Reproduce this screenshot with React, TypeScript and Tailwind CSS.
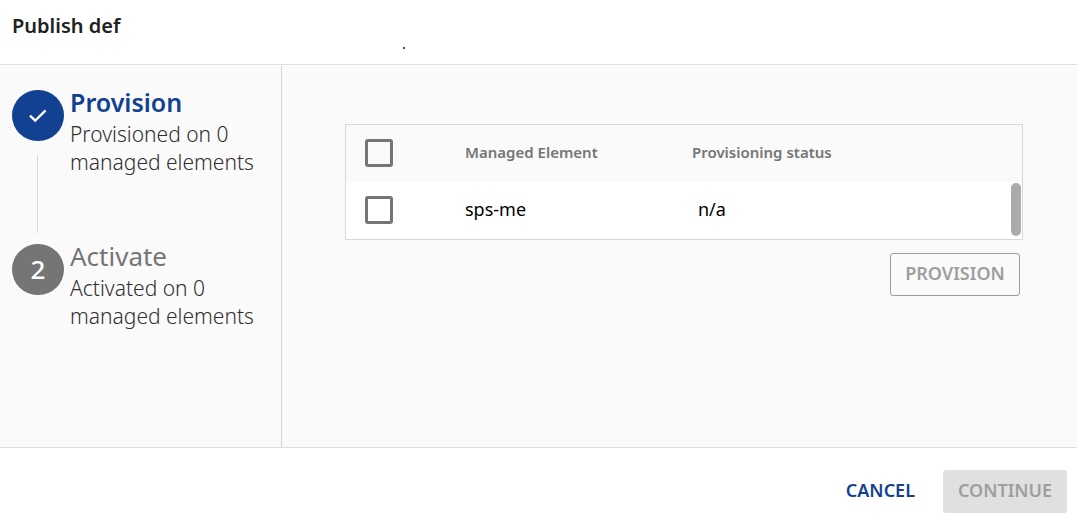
import React from "react";

function Check() {
  return (
    <svg viewBox="0 0 20 16" className="h-4 w-5" fill="none" stroke="white" strokeWidth="2.4" aria-hidden="true">
      <path d="M2 7.6 7.2 12.6 17.6 2.4" />
    </svg>
  );
}

type StepProps = {
  marker: React.ReactNode;
  title: string;
  lines: string[];
  active?: boolean;
  last?: boolean;
};

function Step({ marker, title, lines, active, last }: StepProps) {
  return (
    <li className={last ? "flex gap-[6px]" : "flex h-[154px] gap-[6px]"}>
      <div className="flex w-[52px] flex-none flex-col items-center">
        <span
          className={
            "flex h-[51px] w-[52px] flex-none items-center justify-center rounded-full text-[26px] font-medium text-white " +
            (active ? "bg-[#124191]" : "bg-[#757575]")
          }
        >
          {marker}
        </span>
        {!last && <span className="mt-[14px] mr-[2px] mb-[11px] w-px flex-1 bg-[#d8d8d8]" />}
      </div>
      <div>
        <h2
          className={
            active
              ? "text-[25px] leading-[24px] font-semibold text-[#124191]"
              : "text-[26px] leading-[24px] text-[#757575]"
          }
        >
          {title}
        </h2>
        <p className="mt-[6px] text-[21px] leading-[28px] font-light text-[#303030]">
          {lines[0]}
          <br />
          {lines[1]}
        </p>
      </div>
    </li>
  );
}

function Tick({ label }: { label: string }) {
  return (
    <input
      type="checkbox"
      aria-label={label}
      className="block size-[28px] appearance-none rounded-[3px] border-[3px] border-[#757575] checked:bg-[#757575]"
    />
  );
}

export default function App() {
  return (
    <div className="flex min-h-screen flex-col bg-white font-['Noto_Sans',sans-serif] text-[#212121]">
      <header className="flex h-[65px] border-b border-[#dedede] pl-[12px]">
        <h1 className="w-[391px] pt-[12px] text-[20px] leading-[28px] font-semibold">Publish def</h1>
        <span className="mt-[47px] size-[2px] bg-[#555555]" />
      </header>

      <main className="mt-px flex flex-1 bg-[#fafafa]">
        <ol className="w-[282px] flex-none border-r border-[#d4d4d4] pt-[24px] pl-[12px]">
          <Step active marker={<Check />} title="Provision" lines={["Provisioned on 0", "managed elements"]} />
          <Step last marker="2" title="Activate" lines={["Activated on 0", "managed elements"]} />
        </ol>

        <section className="flex-1 pt-[58px] pr-[54px] pl-[63px]">
          <div className="relative border border-[#d8d8d8]">
            <table className="w-full table-fixed border-collapse text-left">
              <colgroup>
                <col className="w-[119px]" />
                <col className="w-[227px]" />
                <col />
              </colgroup>
              <thead>
                <tr className="h-[57px] text-[15px] text-[#757575]">
                  <th className="pb-[2px] pl-[19px]">
                    <Tick label="Select all" />
                  </th>
                  <th className="pb-[2px] font-semibold">Managed Element</th>
                  <th className="pb-[2px] font-semibold">Provisioning status</th>
                </tr>
              </thead>
              <tbody>
                <tr className="h-[57px] bg-white text-[18px] text-black">
                  <td className="pb-[2px] pl-[19px]">
                    <Tick label="Select sps-me" />
                  </td>
                  <td className="pb-[2px]">sps-me</td>
                  <td className="pb-[2px] pl-[6px]">n/a</td>
                </tr>
              </tbody>
            </table>
            <span className="absolute right-[1px] bottom-[3px] h-[53px] w-[10px] rounded-full bg-[#ababab]" />
          </div>
          <div className="mt-[13px] mr-[3px] flex justify-end">
            <button
              type="button"
              disabled
              className="h-[43px] w-[130px] rounded-[3px] border border-[#9e9e9e] pb-[2px] text-[18px] font-semibold text-[#9e9e9e]"
            >
              PROVISION
            </button>
          </div>
        </section>
      </main>

      <footer className="flex h-[72px] items-start justify-end gap-[12px] border-t border-[#dedede] pt-[22px] pr-[10px]">
        <button type="button" className="h-[43px] px-[16px] pb-[2px] text-[18px] font-semibold text-[#124191]">
          CANCEL
        </button>
        <button
          type="button"
          disabled
          className="h-[43px] w-[124px] rounded-[3px] bg-[#e0e0e0] pb-[2px] text-[18px] font-semibold text-[#9e9e9e]"
        >
          CONTINUE
        </button>
      </footer>
    </div>
  );
}
